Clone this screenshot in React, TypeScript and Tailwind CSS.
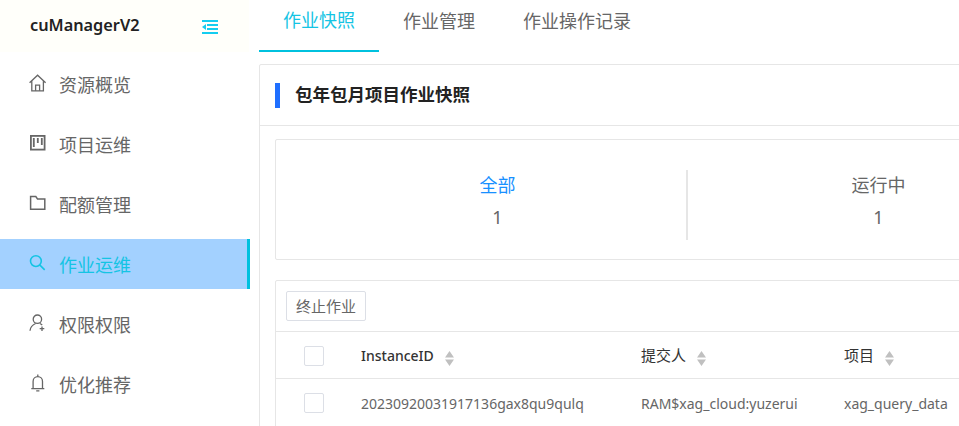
const font = "font-['Noto_Sans','Noto_Sans_CJK_SC',sans-serif]";

function HomeIcon() {
  return (
    <svg width="18" height="18" viewBox="0 0 18 18" fill="none" stroke="currentColor" strokeWidth="1.3">
      <path d="M0.6 8.8 8.6 1.2l8 7.6M2.8 7.2v9.6h11.6V7.2" />
      <path d="M6.6 16.8v-5.6h4v5.6" />
    </svg>
  );
}
function BoardIcon() {
  return (
    <svg width="18" height="18" viewBox="0 0 18 18" fill="none" stroke="currentColor" strokeWidth="1.8">
      <rect x="1.9" y="1.9" width="13.7" height="13.7" />
      <path d="M4.8 4v9M8.8 4v5M12.8 4v7" strokeWidth="1.8" />
    </svg>
  );
}
function FolderIcon() {
  return (
    <svg width="18" height="18" viewBox="0 0 18 18" fill="none" stroke="currentColor" strokeWidth="1.5">
      <path d="M1.6 2.6h5.2l1.7 2.3h7.3v10.4H1.6z" />
    </svg>
  );
}
function SearchIcon() {
  return (
    <svg width="18" height="18" viewBox="0 0 18 18" fill="none" stroke="currentColor" strokeWidth="1.6">
      <circle cx="6.9" cy="7.1" r="5.4" />
      <path d="m10.9 11.1 4.8 4.8" />
    </svg>
  );
}
function UserIcon() {
  return (
    <svg width="18" height="18" viewBox="0 0 18 18" fill="none" stroke="currentColor" strokeWidth="1.3">
      <circle cx="8.4" cy="5.2" r="4.2" />
      <path d="M1 16.8c.3-3.6 2.6-6 5.6-7.3M10.9 9.5c.9.4 1.7.9 2.3 1.5" />
      <path d="M13 12.4v4.6M10.7 14.7h4.6" />
    </svg>
  );
}
function BellIcon() {
  return (
    <svg width="18" height="18" viewBox="0 0 18 18" fill="none" stroke="currentColor" strokeWidth="1.3">
      <path d="M2.3 14.6h13M4.1 14.6V7.4a4.7 4.7 0 0 1 9.4 0v7.2" />
      <path d="M8.8 .6v2M7.2 16.8h3.2" />
    </svg>
  );
}
function FoldIcon() {
  return (
    <svg width="16" height="14" viewBox="0 0 16 14" fill="none" stroke="#14cdf0" strokeWidth="1.8" className="mt-[2px]">
      <path d="M0 1h16M5 5h11M5 9h11M0 13h16" />
      <path d="M4 4v6L0 7z" fill="#14cdf0" stroke="none" />
    </svg>
  );
}
function SortIcon() {
  return (
    <svg width="9" height="15" viewBox="0 0 9 15" fill="#c0c0c0" className="ml-[11px] shrink-0 translate-y-[2px]">
      <path d="M4.5 0 9 6.4H0zM4.5 15 9 8.6H0z" />
    </svg>
  );
}

const navItems = [
  { label: "资源概览", icon: <HomeIcon /> },
  { label: "项目运维", icon: <BoardIcon /> },
  { label: "配额管理", icon: <FolderIcon /> },
  { label: "作业运维", icon: <SearchIcon />, active: true },
  { label: "权限权限", icon: <UserIcon /> },
  { label: "优化推荐", icon: <BellIcon /> },
];

function Checkbox() {
  return <span className="block h-5 w-5 rounded-[2px] border border-[#dcdfe6] bg-white" />;
}

export default function App() {
  return (
    <div className={`${font} flex h-[426px] w-[959px] gap-[9px] overflow-hidden bg-white`}>
      <aside className="w-[250px] shrink-0">
        <div className="flex h-[52px] w-[249px] items-center justify-between bg-[#fffffa] pl-[30px] pr-[31px]">
          <span className="mb-[2px] text-[16.3px] font-semibold text-[#222]">cuManagerV2</span>
          <FoldIcon />
        </div>
        <nav className="flex flex-col gap-[10px] pt-[7px]">
          {navItems.map((item) => (
            <div
              key={item.label}
              className={
                item.active
                  ? "flex h-[50px] items-center gap-[12px] border-r-[3px] border-[#00c1de] bg-[#a3d1ff] pl-[29px] text-[18px] text-[#14c4e4]"
                  : "flex h-[50px] items-center gap-[12px] pl-[29px] text-[18px] text-[#666]"
              }
            >
              <span className="mb-[2px]">{item.icon}</span>
              <span className="mt-[2px]">{item.label}</span>
            </div>
          ))}
        </nav>
      </aside>

      <main className="w-[1100px] shrink-0">
        <div className="flex h-[52px] text-[18px] text-[#666]">
          <div className="flex w-[120px] items-center justify-center border-b-2 border-[#00c1de] pb-[10px] text-[#14c4e4]">作业快照</div>
          <div className="flex w-[120px] items-center justify-center pb-[10px]">作业管理</div>
          <div className="flex items-center px-6 pb-[10px]">作业操作记录</div>
        </div>

        <section className="mt-3 rounded-[2px] border border-[#e6e6e6] bg-white">
          <div className="flex h-[61px] items-center gap-[15px] border-b border-[#e6e6e6] pl-[15px]">
            <span className="h-[25px] w-[5px] bg-[#1f6fff]" />
            <h1 className="text-[17.5px] font-bold leading-none text-[#222]">包年包月项目作业快照</h1>
          </div>

          <div className="ml-[15px] mt-[13px] flex h-[121px] items-start rounded-[2px] border border-[#e6e6e6] pl-[31px] pt-[30px]">
            <div className="flex h-[70px] w-[381px] flex-col items-center gap-[6px] border-r-2 border-[#e6e6e6] pl-[2px] pt-[2px] text-[18px] text-[#666]">
              <span className="leading-[26px] text-[#1890ff]">全部</span>
              <span className="leading-[26px]">1</span>
            </div>
            <div className="flex h-[70px] w-[381px] flex-col items-center gap-[6px] pt-[2px] text-[18px] text-[#666]">
              <span className="leading-[26px]">运行中</span>
              <span className="leading-[26px]">1</span>
            </div>
          </div>

          <div className="ml-[15px] mt-[20px] rounded-[2px] border border-[#e6e6e6]">
            <div className="h-[51px] border-b border-[#e6e6e6] pl-[10px] pt-[10px]">
              <button className="h-[30px] w-[80px] rounded-[2px] border border-[#dcdfe6] bg-white text-[15px] text-[#666]">终止作业</button>
            </div>
            <div className="grid h-[47px] grid-cols-[85px_280px_203px_1fr] items-center border-b border-[#e6e6e6] pt-[2px] text-[#333]">
              <div className="pl-[28px]"><Checkbox /></div>
              <div className="flex items-center">
                <span className="mb-[2px] text-[14px] font-medium">InstanceID</span>
                <SortIcon />
              </div>
              <div className="flex items-center">
                <span className="mb-[2px] text-[15px]">提交人</span>
                <SortIcon />
              </div>
              <div className="flex items-center">
                <span className="mb-[2px] text-[15px]">项目</span>
                <SortIcon />
              </div>
            </div>
            <div className="grid h-[48px] grid-cols-[85px_280px_203px_1fr] items-center text-[14px] text-[#666]">
              <div className="pl-[28px]"><Checkbox /></div>
              <div>20230920031917136gax8qu9qulq</div>
              <div>RAM$xag_cloud:yuzerui</div>
              <div>xag_query_data</div>
            </div>
          </div>
        </section>
      </main>
    </div>
  );
}
